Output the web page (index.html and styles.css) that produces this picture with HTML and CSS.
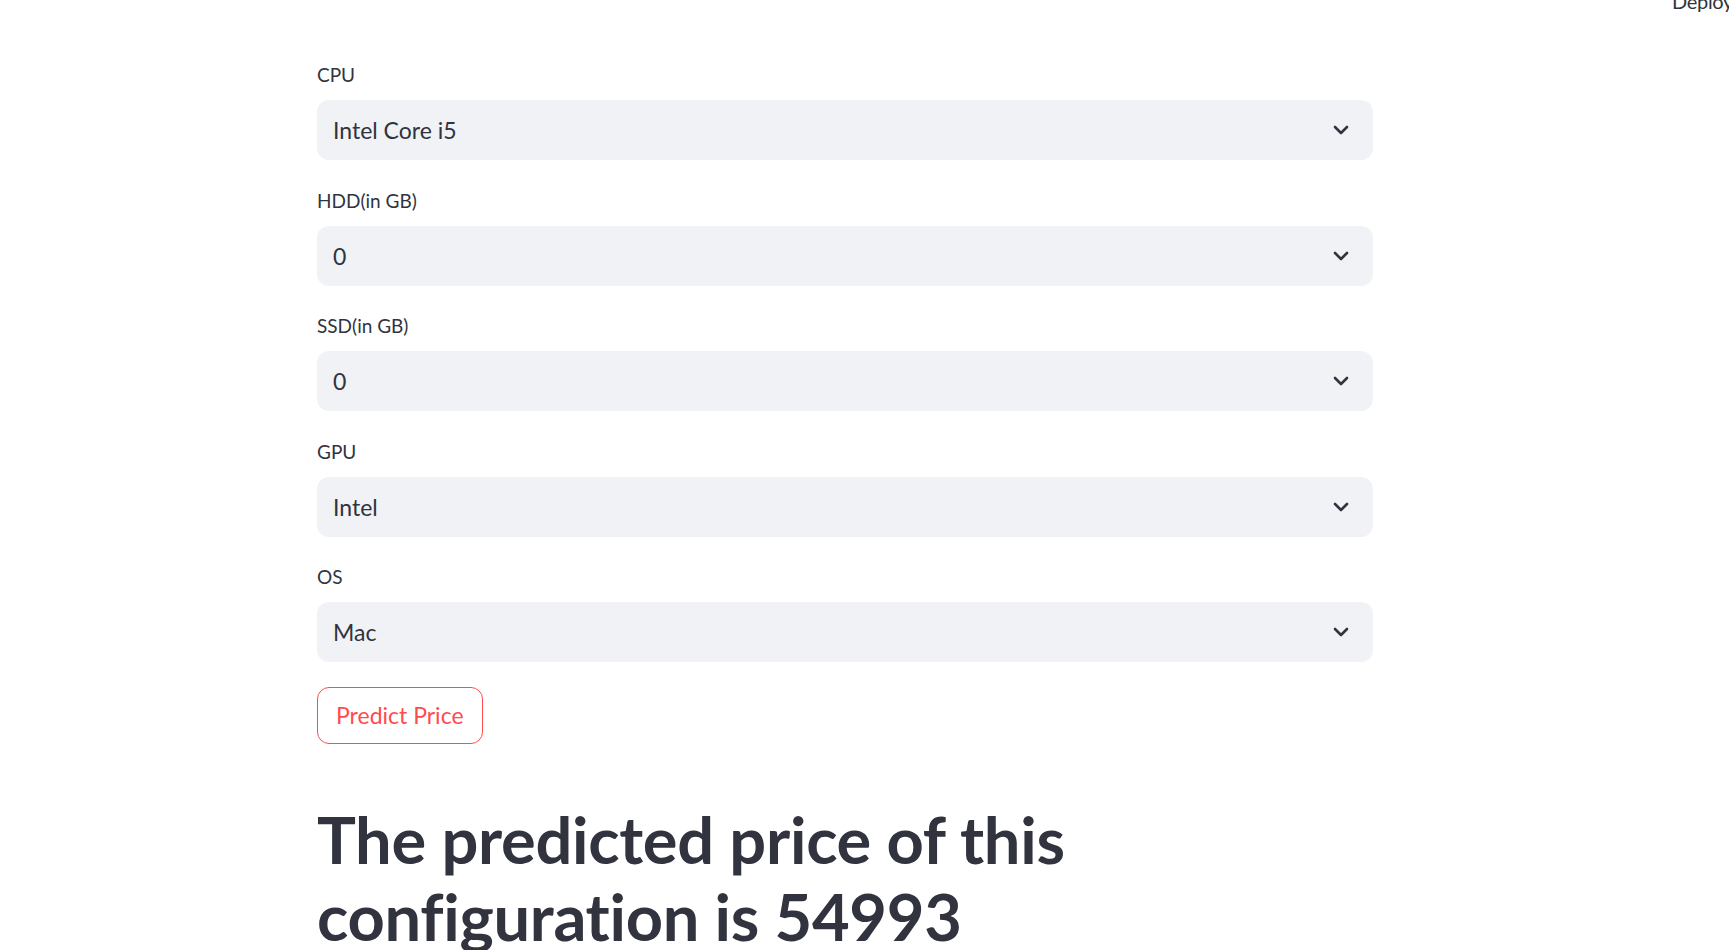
FILE: index.html
```html
<!DOCTYPE html>
<html lang="en">
<head>
<meta charset="utf-8">
<title>Laptop Price Predictor</title>
<link rel="stylesheet" href="styles.css">
</head>
<body>
<header class="topbar"><span class="deploy">Deploy</span></header>
<main class="main">
  <div class="block">
    <div class="field">
      <div class="label">CPU</div>
      <div class="select"><span class="value">Intel Core i5</span>
        <svg class="chev" width="16" height="10" viewBox="0 0 16 10"><path d="M2 2 L8 8 L14 2" fill="none" stroke="#31333f" stroke-width="2.6" stroke-linecap="round" stroke-linejoin="round"/></svg>
      </div>
    </div>
    <div class="field">
      <div class="label">HDD(in GB)</div>
      <div class="select"><span class="value">0</span>
        <svg class="chev" width="16" height="10" viewBox="0 0 16 10"><path d="M2 2 L8 8 L14 2" fill="none" stroke="#31333f" stroke-width="2.6" stroke-linecap="round" stroke-linejoin="round"/></svg>
      </div>
    </div>
    <div class="field">
      <div class="label">SSD(in GB)</div>
      <div class="select"><span class="value">0</span>
        <svg class="chev" width="16" height="10" viewBox="0 0 16 10"><path d="M2 2 L8 8 L14 2" fill="none" stroke="#31333f" stroke-width="2.6" stroke-linecap="round" stroke-linejoin="round"/></svg>
      </div>
    </div>
    <div class="field">
      <div class="label">GPU</div>
      <div class="select"><span class="value">Intel</span>
        <svg class="chev" width="16" height="10" viewBox="0 0 16 10"><path d="M2 2 L8 8 L14 2" fill="none" stroke="#31333f" stroke-width="2.6" stroke-linecap="round" stroke-linejoin="round"/></svg>
      </div>
    </div>
    <div class="field">
      <div class="label">OS</div>
      <div class="select"><span class="value">Mac</span>
        <svg class="chev" width="16" height="10" viewBox="0 0 16 10"><path d="M2 2 L8 8 L14 2" fill="none" stroke="#31333f" stroke-width="2.6" stroke-linecap="round" stroke-linejoin="round"/></svg>
      </div>
    </div>
    <div class="btnrow"><button class="btn">Predict Price</button></div>
    <h1 class="result">The predicted price of this configuration is 54993</h1>
  </div>
</main>
</body>
</html>
```
FILE: styles.css
```css
html, body {
  margin: 0;
  padding: 0;
  background: #ffffff;
  overflow: hidden;
  height: 950px;
}
body {
  font-family: "Lato", "Noto Sans", sans-serif;
  font-variant-ligatures: none;
  color: #31333f;
}
.topbar {
  position: absolute;
  top: 0;
  right: 0;
  height: 20px;
}
.deploy {
  position: absolute;
  top: -11px;
  left: -57px;
  font-size: 20px;
  line-height: 24px;
  letter-spacing: -0.3px;
  color: #31333f;
  white-space: nowrap;
}
.main {
  padding: 63px 0 0 317px;
}
.block {
  width: 1056px;
  display: flex;
  flex-direction: column;
}
.field {
  display: flex;
  flex-direction: column;
  margin-bottom: 28.5px;
}
.label {
  font-size: 19px;
  line-height: 24px;
  height: 24px;
  margin-bottom: 13px;
}
.select {
  height: 60px;
  background: #f0f2f6;
  border-radius: 12px;
  display: flex;
  align-items: center;
  justify-content: space-between;
  padding: 0 24px 0 16px;
}
.value {
  font-size: 23px;
}
.chev {
  display: block;
}
.btnrow {
  margin-top: -4px;
}
.btn {
  height: 57px;
  padding: 0 18px;
  border: 1px solid #ff4b4b;
  border-radius: 12px;
  background: #ffffff;
  color: #ff4b4b;
  font-family: inherit;
  font-size: 23px;
  font-variant-ligatures: none;
}
.result {
  margin: 57px 0 0 0;
  font-size: 65px;
  line-height: 77px;
  font-weight: 700;
  letter-spacing: -0.3px;
  width: 800px;
}
```
